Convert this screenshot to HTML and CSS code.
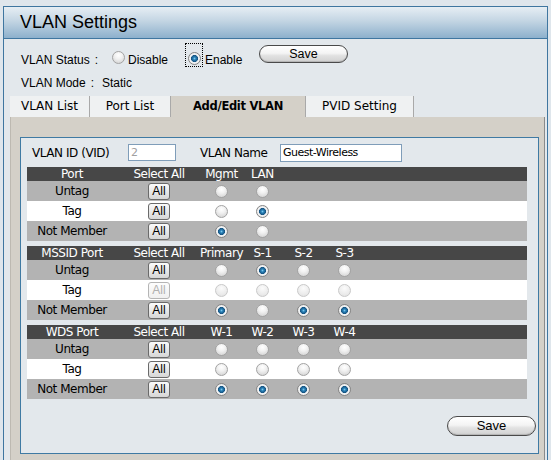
FILE: index.html
```html
<!DOCTYPE html>
<html>
<head>
<meta charset="utf-8">
<title>VLAN Settings</title>
<link rel="stylesheet" href="styles.css">
</head>
<body>
<div class="panel">
  <div class="title">VLAN Settings</div>
  <div class="content">
    <div class="status-row">
      <span class="lbl status-lbl">VLAN Status<span class="colon">:</span></span>
      <span class="radio r-disable"></span>
      <span class="opt opt-disable">Disable</span>
      <span class="focus"><span class="radio on"></span></span>
      <span class="opt opt-enable">Enable</span>
      <span class="pill save-top">Save</span>
    </div>
    <div class="mode-row">
      <span class="lbl mode-lbl">VLAN Mode<span class="colon">:</span></span>
      <span class="mode-val">Static</span>
    </div>
    <div class="tabs">
      <div class="tab t1">VLAN List</div>
      <div class="tab t2">Port List</div>
      <div class="tab t3 active">Add/Edit VLAN</div>
      <div class="tab t4">PVID Setting</div>
    </div>
    <div class="tabpanel">
      <div class="box">
        <div class="idrow">
          <span class="idlbl">VLAN ID (VID)</span>
          <span class="input vid">2</span>
          <span class="namelbl">VLAN Name</span>
          <span class="input vname">Guest-Wireless</span>
        </div>

        <div class="vt">
          <div class="vrow head"><span class="c1">Port</span><span class="c2">Select All</span><span class="c">Mgmt</span><span class="c">LAN</span></div>
          <div class="vrow grey"><span class="c1">Untag</span><span class="c2"><span class="all">All</span></span><span class="c"><span class="radio"></span></span><span class="c"><span class="radio"></span></span></div>
          <div class="vrow white"><span class="c1">Tag</span><span class="c2"><span class="all">All</span></span><span class="c"><span class="radio"></span></span><span class="c"><span class="radio on"></span></span></div>
          <div class="vrow grey"><span class="c1">Not Member</span><span class="c2"><span class="all">All</span></span><span class="c"><span class="radio on"></span></span><span class="c"><span class="radio"></span></span></div>
        </div>

        <div class="vt">
          <div class="vrow head"><span class="c1">MSSID Port</span><span class="c2">Select All</span><span class="c">Primary</span><span class="c">S-1</span><span class="c">S-2</span><span class="c">S-3</span></div>
          <div class="vrow grey"><span class="c1">Untag</span><span class="c2"><span class="all">All</span></span><span class="c"><span class="radio"></span></span><span class="c"><span class="radio on"></span></span><span class="c"><span class="radio"></span></span><span class="c"><span class="radio"></span></span></div>
          <div class="vrow white"><span class="c1">Tag</span><span class="c2"><span class="all dis">All</span></span><span class="c"><span class="radio dis"></span></span><span class="c"><span class="radio dis"></span></span><span class="c"><span class="radio dis"></span></span><span class="c"><span class="radio dis"></span></span></div>
          <div class="vrow grey"><span class="c1">Not Member</span><span class="c2"><span class="all">All</span></span><span class="c"><span class="radio on"></span></span><span class="c"><span class="radio"></span></span><span class="c"><span class="radio on"></span></span><span class="c"><span class="radio on"></span></span></div>
        </div>

        <div class="vt">
          <div class="vrow head"><span class="c1">WDS Port</span><span class="c2">Select All</span><span class="c">W-1</span><span class="c">W-2</span><span class="c">W-3</span><span class="c">W-4</span></div>
          <div class="vrow grey"><span class="c1">Untag</span><span class="c2"><span class="all">All</span></span><span class="c"><span class="radio"></span></span><span class="c"><span class="radio"></span></span><span class="c"><span class="radio"></span></span><span class="c"><span class="radio"></span></span></div>
          <div class="vrow white"><span class="c1">Tag</span><span class="c2"><span class="all">All</span></span><span class="c"><span class="radio"></span></span><span class="c"><span class="radio"></span></span><span class="c"><span class="radio"></span></span><span class="c"><span class="radio"></span></span></div>
          <div class="vrow grey"><span class="c1">Not Member</span><span class="c2"><span class="all">All</span></span><span class="c"><span class="radio on"></span></span><span class="c"><span class="radio on"></span></span><span class="c"><span class="radio on"></span></span><span class="c"><span class="radio on"></span></span></div>
        </div>

        <div class="bottom"><span class="pill save-bottom">Save</span></div>
      </div>
    </div>
  </div>
</div>
</body>
</html>
```

FILE: styles.css
```css
html, body {
  margin: 0;
  padding: 0;
}
body {
  background: #dfe6ec;
  font-family: "Liberation Sans", Arial, sans-serif;
  font-size: 12px;
  color: #000;
  width: 551px;
  height: 460px;
  overflow: hidden;
}
.panel {
  margin: 6px 0 0 3px;
  width: 545px;
  box-sizing: border-box;
  border: 1px solid #3f76a0;
  border-bottom: none;
  background: #e3e8ec;
}
.title {
  height: 31px;
  line-height: 31px;
  padding-left: 16px;
  font-size: 18px;
  background: linear-gradient(#e6eef4, #c3d5e3 45%, #8db0cc);
  border-bottom: 1px solid #3f76a0;
}
.status-row {
  display: flex;
  align-items: flex-start;
  height: 24px;
  margin-top: 4px;
  padding-left: 17px;
}
.lbl {
  line-height: 16px;
  display: inline-block;
}
.colon {
  margin-left: 5px;
}
.status-lbl {
  width: 91px;
  margin-top: 9px;
}
.opt {
  line-height: 16px;
  margin-top: 9px;
}
.opt-disable {
  margin-left: 3px;
  width: 57px;
}
.opt-enable {
  margin-left: 2px;
  width: 54px;
}
.r-disable {
  margin-top: 8px;
}
.focus {
  display: inline-block;
  box-sizing: border-box;
  width: 18px;
  height: 24px;
  border: 1px dotted #000;
  padding: 8px 0 0 2px;
}
.pill {
  display: inline-block;
  box-sizing: border-box;
  text-align: center;
  border: 1px solid #4a4a4a;
  border-radius: 10px;
  background: linear-gradient(#ffffff, #f4f4f4 45%, #e2e2e2 60%, #d2d2d2);
  box-shadow: inset 0 -1px 1px rgba(0,0,0,0.15);
  color: #000;
}
.save-top {
  width: 89px;
  height: 18px;
  line-height: 16px;
  margin-top: 2px;
  font-size: 12.5px;
}
.mode-row {
  display: flex;
  margin-top: 8px;
  padding-left: 17px;
  line-height: 16px;
}
.mode-lbl {
  width: 81px;
}
.tabs {
  display: flex;
  margin: 5px 0 0 6px;
  height: 21px;
  font-family: "DejaVu Sans", Verdana, sans-serif;
  font-size: 12px;
}
.tab {
  box-sizing: border-box;
  height: 21px;
  line-height: 21px;
  text-align: center;
  background: #eff1f2;
  border-right: 1px solid #a9a9a9;
  color: #000;
}
.t1 { width: 80px; }
.t2 { width: 81px; }
.t3 { width: 135px; }
.t4 { width: 108px; }
.tab.active {
  background: #d4d0c8;
  font-weight: bold;
  font-size: 11.5px;
  letter-spacing: -0.3px;
}
.tabpanel {
  margin-left: 6px;
  width: 535px;
  box-sizing: border-box;
  background: #d4d0c8;
  border-left: 1px solid #bdb9b1;
  border-right: 1px solid #8a8a8a;
  padding: 20px 5px 20px 9px;
}
.box {
  box-sizing: border-box;
  width: 519px;
  height: 317px;
  border: 1px solid #3f7aa3;
  background: #e3e8ec;
  padding-top: 6px;
  font-family: "DejaVu Sans", Verdana, sans-serif;
  font-size: 12px;
  letter-spacing: -0.45px;
}
.idrow {
  display: flex;
  align-items: center;
  height: 17px;
  padding-left: 11px;
}
.idlbl {
  width: 96px;
}
.input {
  box-sizing: border-box;
  display: inline-block;
  background: #fff;
  border: 1px solid #7f9db9;
  font-family: "DejaVu Sans", Verdana, sans-serif;
  font-size: 11px;
  letter-spacing: -0.5px;
  padding-left: 2px;
  line-height: 15px;
}
.vid {
  width: 48px;
  height: 17px;
  color: #a0a0a0;
}
.namelbl {
  margin-left: 24px;
  width: 80px;
}
.vname {
  width: 122px;
  height: 18px;
  line-height: 16px;
}
.vt {
  margin: 5px 0 0 6px;
  width: 500px;
}
.idrow + .vt {
  margin-top: 6px;
}
.vrow {
  display: flex;
  align-items: center;
  height: 20px;
}
.vrow.head {
  height: 14px;
  line-height: 14px;
  background: #474747;
  color: #fff;
}
.vrow.grey { background: #b3b3b3; }
.vrow.white { background: #ffffff; }
.c1 {
  width: 90px;
  text-align: center;
}
.c2 {
  width: 84px;
  text-align: center;
  display: flex;
  justify-content: center;
}
.c {
  width: 41px;
  display: flex;
  justify-content: center;
}
.all {
  box-sizing: border-box;
  display: inline-block;
  width: 22px;
  height: 17px;
  line-height: 15px;
  text-align: center;
  font-family: "Liberation Sans", Arial, sans-serif;
  font-size: 12px;
  letter-spacing: 0;
  border: 1px solid #6a6a6a;
  border-radius: 3px;
  background: linear-gradient(#fbfbfb, #e9e9e9 50%, #d6d6d6);
  color: #000;
}
.all.dis {
  border-color: #b5b5b5;
  color: #b0b0b0;
  background: linear-gradient(#fdfdfd, #f0f0f0);
}
.radio {
  display: inline-block;
  box-sizing: border-box;
  width: 13px;
  height: 13px;
  border-radius: 50%;
  border: 1px solid #a3a3a3;
  background: radial-gradient(circle at 50% 30%, #ffffff 0, #f1f1f1 40%, #cdcdcd 100%);
}
.radio.on {
  border-color: #858585;
  background: radial-gradient(circle at 50% 50%, #7cc8ec 0, #2a82b8 1.4px, #175583 3.2px, #e9eef2 3.8px, #f4f4f4 4.5px, #cfcfcf 100%);
}
.radio.dis {
  border-color: #c9c9c9;
  background: radial-gradient(circle at 50% 30%, #fbfbfb 0, #ececec 60%, #dedede 100%);
}
.bottom {
  display: flex;
  justify-content: flex-end;
  padding-right: 2px;
  margin-top: 17px;
}
.save-bottom {
  width: 89px;
  height: 20px;
  line-height: 18px;
  font-family: "Liberation Sans", Arial, sans-serif;
  font-size: 13px;
  letter-spacing: 0;
}
```
